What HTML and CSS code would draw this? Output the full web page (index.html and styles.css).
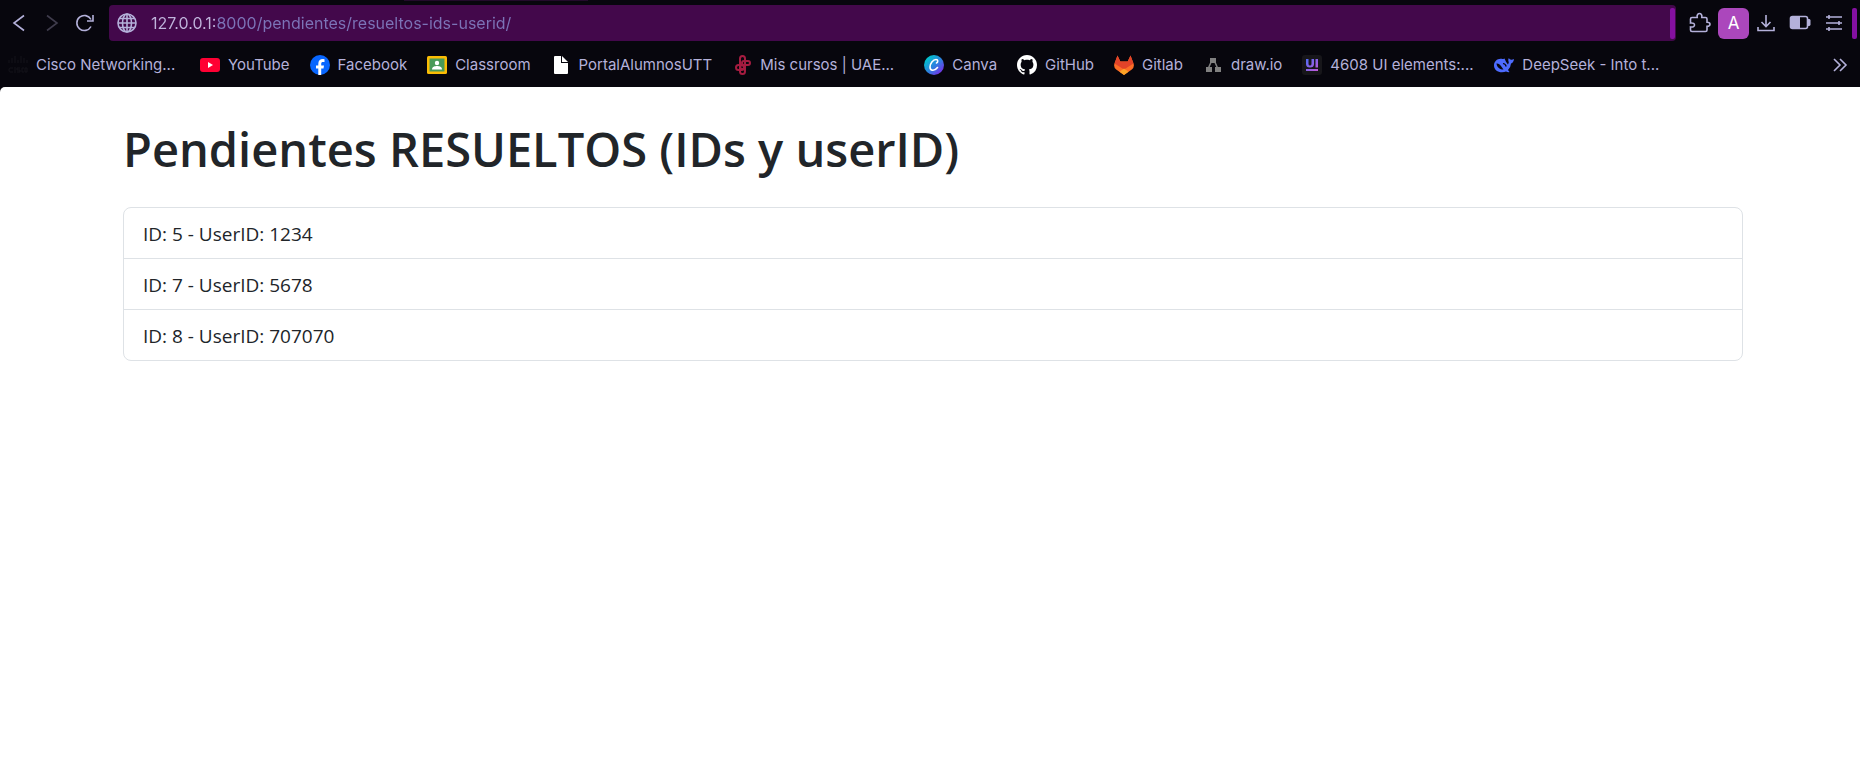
FILE: index.html
```html
<!DOCTYPE html>
<html lang="es">
<head>
<meta charset="utf-8">
<meta name="viewport" content="width=device-width, initial-scale=1">
<title>Pendientes RESUELTOS</title>
<link rel="stylesheet" href="styles.css">
</head>
<body>
<header class="chrome">
  <div class="tab-edge"></div>
  <div class="toolbar">
    <div class="nav">
      <button class="tool" type="button" aria-label="Atrás"><svg width="20" height="20" viewBox="0 0 20 20"><path d="M15 2.500L5 10l10 7.500"/></svg></button>
      <button class="tool" type="button" aria-label="Adelante" disabled><svg width="20" height="20" viewBox="0 0 20 20"><path d="M5 2.500L15 10 5 17.500"/></svg></button>
      <button class="tool" type="button" aria-label="Recargar"><svg width="20" height="20" viewBox="0 0 20 20"><path d="M16 13.500A7.500 7.500 0 1 1 16 6.500"/><path d="M18 2v6h-6"/></svg></button>
    </div>
    <form class="urlbar">
      <svg class="globe" width="20" height="20" viewBox="0 0 20 20"><circle cx="10" cy="10" r="9"/><ellipse cx="10" cy="10" rx="4.500" ry="9"/><path d="M10 1v18M1 10h18M2.500 5.500h15M2.500 14.500h15"/></svg>
      <input class="url" type="text" aria-label="Dirección" value="127.0.0.1:8000/pendientes/resueltos-ids-userid/">
      <span class="strip"></span>
    </form>
    <div class="actions">
      <div class="tools">
        <button class="tool" type="button" aria-label="Extensiones"><svg width="22" height="22" viewBox="0 0 22 22"><path d="M3 5.500h5.200c-.5-2.800.9-4 2.300-4s2.800 1.200 2.300 4H16.500q1.500 0 1.500 1.500v3.200c2.400 0 3 .8 3 2s-.6 2-3 2V18q0 1.500-1.500 1.500H3q-1.500 0-1.500-1.500v-3c3 .3 4-.7 4-2s-1-2.300-4-2V7q0-1.500 1.500-1.500z"/></svg></button>
        <button class="profile" type="button">A</button>
        <button class="tool" type="button" aria-label="Descargas"><svg width="20" height="20" viewBox="0 0 20 20"><path d="M10 2v11M5.500 9l4.500 4.500L14.500 9M2 14v3.500h16V14"/></svg></button>
        <button class="tool" type="button" aria-label="Batería"><svg width="22" height="20" viewBox="0 0 22 20"><rect x="1.500" y="3.500" width="17" height="12" rx="2"/><path class="solid" d="M2 4h9v11H2zM19 6h1.500l1 1v5l-1 1H19z"/></svg></button>
        <button class="tool" type="button" aria-label="Menú"><svg width="20" height="20" viewBox="0 0 20 20"><path d="M2 4h16M2 10h16M2 16h16M5 2v4M15 8v4M5 14v4"/></svg></button>
      </div>
      <span class="strip"></span>
    </div>
  </div>
  <nav class="bookmarks" aria-label="Marcadores">
    <a href="#" class="bookmark clipped"><svg width="20" height="20" viewBox="0 0 20 20"><path d="M1 5v3M4 3v5M7 1v7M10 5v3M13 1v7M16 3v5M19 5v3M5 13H2q-1 0-1 2t1 2h3M7 12v6M12 13H9v2h3v2H9M16 13h-2v4h2M17 13h2v4h-2z" stroke="#14131a" stroke-width="1" fill="none"/></svg><span class="label">Cisco Networking...</span></a>
    <a href="#" class="bookmark"><svg width="20" height="20" viewBox="0 0 20 20"><rect y="3" width="20" height="14" rx="3" fill="#ff0033"/><path d="M8 7l5 3-5 3z" fill="#fff"/></svg><span class="label">YouTube</span></a>
    <a href="#" class="bookmark"><svg width="20" height="20" viewBox="0 0 20 20"><circle cx="10" cy="10" r="10" fill="#0866ff"/><path d="M8.300 20v-6.600H6v-3h2.300V9c0-3.500 1.600-5 4.700-5q1 0 1.500.2v2.700h-1.300c-1.600 0-2 .6-2 2v1.500H14l-.5 3h-2.300V20z" fill="#fff"/></svg><span class="label">Facebook</span></a>
    <a href="#" class="bookmark"><svg width="20" height="20" viewBox="0 0 20 20"><rect y="1" width="20" height="18" rx="1.500" fill="#fbbc04"/><rect x="2.500" y="3.500" width="15" height="13" fill="#4a9a58"/><circle cx="10" cy="8" r="2.200" fill="#fff"/><path d="M5 14.500c0-3 3-3.500 5-3.500s5 .5 5 3.500z" fill="#fff"/></svg><span class="label">Classroom</span></a>
    <a href="#" class="bookmark"><svg width="20" height="20" viewBox="0 0 20 20"><path d="M4 1h6v7h7v10q0 1-1 1H4q-1 0-1-1V2q0-1 1-1z" fill="#fff"/><path d="M11 1l6 6h-6z" fill="#fff"/></svg><span class="label">PortalAlumnosUTT</span></a>
    <a href="#" class="bookmark clipped"><svg width="20" height="20" viewBox="0 0 20 20"><g fill="none" stroke="#a51c40" stroke-width="2"><rect x="8" y="1" width="5" height="13" rx="2.500"/><rect x="10" y="6" width="8" height="4" rx="2"/><rect x="4" y="10" width="8" height="5" rx="2.500"/><rect x="8" y="10" width="5" height="9" rx="2.500"/></g></svg><span class="label">Mis cursos | UAE...</span></a>
    <a href="#" class="bookmark"><svg width="20" height="20" viewBox="0 0 20 20"><defs><linearGradient id="canva" x1="0" y1="0" x2="1" y2="1"><stop offset=".15" stop-color="#00c4cc"/><stop offset=".55" stop-color="#2f7de0"/><stop offset=".9" stop-color="#7d2ae8"/></linearGradient></defs><circle cx="10" cy="10" r="10" fill="url(#canva)"/><path d="M12.500 8c1.500-.5 2-3.500-.5-3.500-3 0-6 4-6 7.500 0 4 4.500 4.500 7.500.5" fill="none" stroke="#fff" stroke-width="1.600" stroke-linecap="round"/></svg><span class="label">Canva</span></a>
    <a href="#" class="bookmark"><svg width="20" height="20" viewBox="0 0 16 16"><path fill="#fff" d="M8 0C3.580 0 0 3.580 0 8c0 3.540 2.290 6.530 5.470 7.590.4.070.55-.17.55-.38 0-.19-.01-.82-.01-1.490-2.010.37-2.530-.49-2.690-.94-.09-.23-.48-.94-.82-1.130-.28-.15-.68-.52-.01-.53.63-.01 1.080.58 1.230.82.72 1.210 1.870.87 2.330.66.07-.52.28-.87.51-1.070-1.780-.2-3.640-.89-3.640-3.950 0-.87.310-1.590.82-2.150-.08-.2-.36-1.020.08-2.120 0 0 .67-.21 2.200.82.64-.18 1.320-.27 2-.27s1.360.09 2 .27c1.530-1.040 2.200-.82 2.200-.82.44 1.100.16 1.920.08 2.120.51.56.82 1.270.82 2.150 0 3.070-1.870 3.750-3.650 3.950.29.25.54.73.54 1.480 0 1.070-.01 1.930-.01 2.200 0 .21.15.46.55.38A8 8 0 0 0 16 8c0-4.420-3.580-8-8-8z"/></svg><span class="label">GitHub</span></a>
    <a href="#" class="bookmark"><svg width="20" height="20" viewBox="0 0 20 20"><path d="M3.500.5L6.300 6.500h7.400L16.500.5l3 8q1.300 3.500-1.700 6L10 20l-7.800-5.500q-3-2.500-1.700-6z" fill="#fc6d26"/><path d="M3.500.5L6.300 6.500h7.400L16.500.5l3 8L10 14.500.5 8.500z" fill="#e24329"/><path d="M10 13.500l4.500 3.300L10 20l-4.500-3.200z" fill="#fca326"/></svg><span class="label">Gitlab</span></a>
    <a href="#" class="bookmark"><svg width="20" height="20" viewBox="0 0 20 20"><path d="M9 5l-4 9M11 5l4 9" stroke="#808080" stroke-width="1.500"/><path d="M7 3h6v5H7zM3 12h6v5H3zM12 12h6v5h-6z" fill="#808080"/></svg><span class="label">draw.io</span></a>
    <a href="#" class="bookmark clipped"><svg width="20" height="20" viewBox="0 0 20 20"><defs><linearGradient id="uiv" x1="0" y1="0" x2="1" y2="1"><stop offset="0" stop-color="#4f6cf5"/><stop offset="1" stop-color="#c558d8"/></linearGradient></defs><rect width="20" height="20" rx="3" fill="#17161a"/><path d="M4 4h2.500v5q0 1.500 1.500 1.500T9.500 9V4H12v5q0 3.500-4 3.500T4 9zM13.500 4H16v8.500h-2.500zM4 14h12v2H4z" fill="url(#uiv)"/></svg><span class="label">4608 UI elements:...</span></a>
    <a href="#" class="bookmark clipped"><svg width="20" height="20" viewBox="0 0 20 20"><path d="M8.500 4C4 2.800 0 6 0 10.500 0 14.500 3.500 17.300 8 17.300q2.500 0 4-.8 1.500.8 3.500.6l-1.500-2q2.800-3 3-6.600 2.500-.8 3-4.500-1.500 1-3 .8-1.800-.6-2.200-1.800-1.300 2 0 4.500l-.8 2Q11.500 6.500 10.500 3.500q-1.300.5-2 .5z" fill="#4d6bfe"/><path d="M2.500 8.500c3-.5 5 3 7 6-3.500 0-6.500-2-7-6z" fill="#07060d"/><path d="M9 8.500q2.500.3 3.200 3" fill="none" stroke="#07060d" stroke-width="1.200"/></svg><span class="label">DeepSeek - Into t...</span></a>
    <button class="tool more" type="button" aria-label="Más marcadores"><svg width="20" height="20" viewBox="0 0 20 20"><path d="M4 4l6 6-6 6M10 4l6 6-6 6"/></svg></button>
  </nav>
</header>
<main class="page">
  <h1 class="title">Pendientes RESUELTOS (IDs y userID)</h1>
  <ul class="list">
    <li class="item">ID: 5 - UserID: 1234</li>
    <li class="item">ID: 7 - UserID: 5678</li>
    <li class="item">ID: 8 - UserID: 707070</li>
  </ul>
</main>
</body>
</html>
```
FILE: styles.css
```css
* { box-sizing: border-box; }

body {
  margin: 0;
  min-height: 100vh;
  background: #07060d;
  display: flex;
  flex-direction: column;
}

.chrome {
  font-family: Inter, sans-serif;
  color: #b4b1da;
}

.tab-edge {
  width: 184px;
  height: 1px;
  margin-left: 404px;
  background: #220a2b;
}

.toolbar {
  display: flex;
  align-items: center;
  padding-top: 4px;
}

.nav {
  display: flex;
  gap: 13px;
  padding: 0 14px 0 9px;
}

.tool {
  display: flex;
  padding: 0;
  border: 0;
  background: none;
  color: inherit;
}

.tool svg,
.globe {
  fill: none;
  stroke: currentColor;
  stroke-width: 1.6;
}

.tool .solid {
  fill: currentColor;
  stroke: none;
}

.tool:disabled { color: #3f3c4c; }

.urlbar {
  flex: 1;
  display: flex;
  align-items: center;
  height: 36px;
  padding: 0 1px 0 8px;
  border-radius: 4px;
  background: #43084b;
}

.url {
  flex: 1;
  min-width: 0;
  margin-left: 14px;
  padding: 0;
  border: 0;
  outline: 0;
  font: 16px/24px Inter, sans-serif;
  color: transparent;
  background: linear-gradient(90deg, #c0b4dc 66px, #7c74b8 66px);
  background-clip: text;
  -webkit-background-clip: text;
}

.strip {
  width: 5px;
  height: 31px;
  border-radius: 2px;
  background: #8410a0;
}

.actions {
  display: flex;
  align-items: center;
  gap: 8px;
  padding: 0 3px 0 13px;
}

.tools {
  display: flex;
  align-items: center;
  gap: 13px;
}

.profile {
  width: 31px;
  height: 31px;
  margin: 0 -6px;
  padding: 0;
  border: 0;
  border-radius: 6px;
  background: #ab47bc;
  color: #fff;
  font: 17px/31px Inter, sans-serif;
}

.bookmarks {
  display: flex;
  align-items: center;
  gap: 20px;
  height: 46px;
  padding: 2px 10px 0 8px;
  font-size: 15px;
  line-height: 20px;
}

.bookmark {
  display: flex;
  gap: 8px;
  color: inherit;
  text-decoration: none;
  white-space: nowrap;
}

.clipped .label { width: 144px; }

.more { margin-left: auto; }

.page {
  flex: 1;
  padding: 32px 117px 32px 123px;
  border-top-left-radius: 5px;
  background: #fff;
  color: #212529;
  font-family: "Open Sans", sans-serif;
}

.title {
  margin: 0 0 28px;
  font-size: 47px;
  font-weight: 600;
  line-height: 60px;
}

.list {
  margin: 0;
  padding: 0;
  list-style: none;
  border: 1px solid #dee2e6;
  border-radius: 8px;
}

.item {
  padding: 11px 19px 9px;
  font-size: 19px;
  line-height: 30px;
}

.item + .item { border-top: 1px solid #dee2e6; }
```
